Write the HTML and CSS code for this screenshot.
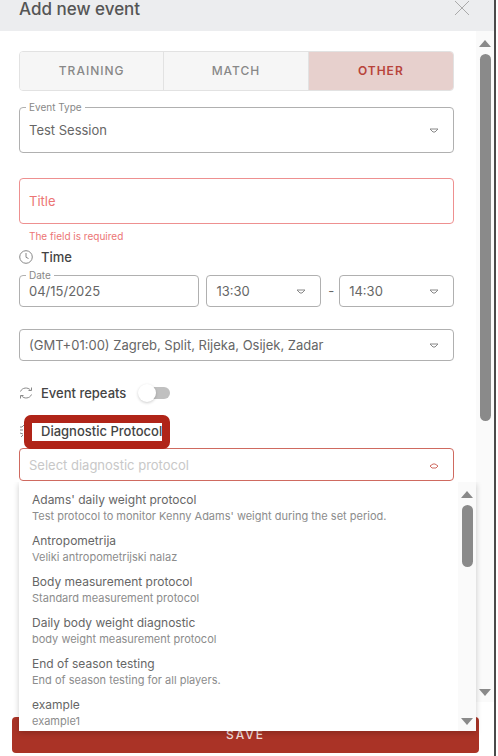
FILE: index.html
```html
<!DOCTYPE html>
<html lang="en">

<head>
<meta charset="utf-8">
<meta name="viewport" content="width=device-width, initial-scale=1">
<title>Add new event</title>
<link rel="stylesheet" href="styles.css">
</head>

<body>
    <div class="panel">
        <header class="panelHeader">
            <h1>Add new event</h1>
            <button type="button" class="closeButton" aria-label="Close">
                <svg width="16" height="16" viewBox="0 0 16 16"><path d="M1 1l14 14M15 1L1 15"/></svg>
            </button>
        </header>

        <div class="panelBody">
            <form class="eventForm" id="eventForm">
                <div class="tabs">
                    <button type="button">TRAINING</button>
                    <button type="button">MATCH</button>
                    <button type="button" class="active">OTHER</button>
                </div>

                <div class="field tall">
                    <label class="floating" for="eventType">Event Type</label>
                    <select id="eventType"><option>Test Session</option></select>
                    <svg class="arrow" width="10" height="6" viewBox="0 0 10 6"><path d="M1 1h8L6 4H4z"/></svg>
                </div>

                <div class="field tall error">
                    <input type="text" id="title" placeholder="Title" aria-label="Title" aria-describedby="titleError">
                </div>
                <p class="helper" id="titleError">The field is required</p>

                <div class="sectionRow timeRow">
                    <svg width="14" height="14" viewBox="0 0 14 14"><circle cx="7" cy="7" r="6.300"/><path d="M7 3v4.300l2.500 1.200"/></svg>
                    <span>Time</span>
                </div>

                <div class="dateRow">
                    <div class="field">
                        <label class="floating" for="date">Date</label>
                        <input type="text" id="date" value="04/15/2025">
                    </div>
                    <div class="field">
                        <select id="from" aria-label="Start time"><option>13:30</option></select>
                        <svg class="arrow" width="10" height="6" viewBox="0 0 10 6"><path d="M1 1h8L6 4H4z"/></svg>
                    </div>
                    <span class="dash">-</span>
                    <div class="field">
                        <select id="to" aria-label="End time"><option>14:30</option></select>
                        <svg class="arrow" width="10" height="6" viewBox="0 0 10 6"><path d="M1 1h8L6 4H4z"/></svg>
                    </div>
                </div>

                <div class="field zone">
                    <select id="zone" aria-label="Time zone"><option>(GMT+01:00) Zagreb, Split, Rijeka, Osijek, Zadar</option></select>
                    <svg class="arrow" width="10" height="6" viewBox="0 0 10 6"><path d="M1 1h8L6 4H4z"/></svg>
                </div>

                <div class="sectionRow repeatRow">
                    <svg width="14" height="14" viewBox="0 0 14 14"><path d="M1.500 5.500C3 1.500 9 .8 11.500 4.200M12.500 1.500v3h-3M12.500 8.500C11 12.500 5 13.200 2.500 9.800M1.500 12.500v-3h3"/></svg>
                    <label for="repeats">Event repeats</label>
                    <input type="checkbox" class="toggle" id="repeats">
                </div>

                <div class="sectionRow protocolRow">
                    <svg width="14" height="14" viewBox="0 0 14 14"><path d="M1 3h2l2-2M1 6h3M1 9l3 1M2 13l2-2M7 4v6"/></svg>
                    <label for="protocol">Diagnostic Protocol</label>
                    <div class="highlight"></div>
                </div>

                <div class="field open">
                    <input type="text" id="protocol" placeholder="Select diagnostic protocol" role="combobox" aria-expanded="true" aria-controls="protocolList">
                    <svg class="arrow" width="10" height="6" viewBox="0 0 10 6"><path d="M1 3l3-2h2l3 2-2 2H3z"/></svg>

                    <div class="menu">
                        <ul id="protocolList" role="listbox">
                            <li role="option"><b>Adams' daily weight protocol</b><small>Test protocol to monitor Kenny Adams' weight during the set period.</small></li>
                            <li role="option"><b>Antropometrija</b><small>Veliki antropometrijski nalaz</small></li>
                            <li role="option"><b>Body measurement protocol</b><small>Standard measurement protocol</small></li>
                            <li role="option"><b>Daily body weight diagnostic</b><small>body weight measurement protocol</small></li>
                            <li role="option"><b>End of season testing</b><small>End of season testing for all players.</small></li>
                            <li role="option"><b>example</b><small>example1</small></li>
                        </ul>
                        <div class="scrollbar">
                            <svg width="12" height="7" viewBox="0 0 12 7"><path d="M0 7l6-7 6 7z"/></svg>
                            <div class="thumb short"></div>
                            <svg width="12" height="7" viewBox="0 0 12 7"><path d="M0 0l6 7 6-7z"/></svg>
                        </div>
                    </div>
                </div>
            </form>

            <div class="scrollbar">
                <svg width="12" height="7" viewBox="0 0 12 7"><path d="M0 7l6-7 6 7z"/></svg>
                <div class="thumb"></div>
                <svg width="12" height="7" viewBox="0 0 12 7"><path d="M0 0l6 7 6-7z"/></svg>
            </div>
        </div>

        <footer class="panelFooter">
            <button type="submit" form="eventForm" class="saveButton">SAVE</button>
        </footer>
    </div>
</body>
</html>
```

FILE: styles.css
```css
* {
    box-sizing: border-box;
}
body {
    margin: 0;
    background-color: #fff;
    color: #666;
    font-family: Inter, "Liberation Sans", sans-serif;
    font-size: 13px;
    line-height: 16px;
}
button, input, select {
    font: inherit;
    color: inherit;
}
svg {
    flex: none;
    fill: none;
    stroke: #888;
}

.panel {
    display: flex;
    flex-direction: column;
    min-height: 100vh;
    margin-right: 2px;
    border-right: 2px solid #4a4a4a;
}
.panelHeader {
    display: flex;
    justify-content: space-between;
    align-items: flex-start;
    height: 31px;
    padding: 0 24px 0 19px;
    background-color: #ecedef;
}
.panelHeader h1 {
    margin: 0;
    font-size: 17px;
    font-weight: 500;
    line-height: 18px;
    color: #555;
}
.closeButton {
    display: flex;
    padding: 0;
    border: 0;
    background: none;
}
.closeButton svg {
    stroke: #aaa;
}
.panelBody {
    display: flex;
    flex: 1;
}
.eventForm {
    flex: 1;
    padding: 20px 22px 0 19px;
}

/* tabs */
.tabs {
    display: grid;
    grid-template-columns: repeat(3, 1fr);
    height: 40px;
    margin-bottom: 16px;
    border: 1px solid #e2e2e2;
    border-radius: 4px;
    overflow: hidden;
}
.tabs button {
    border: 0;
    border-right: 1px solid #e2e2e2;
    background-color: #f6f6f6;
    color: #888;
    font-size: 12px;
    font-weight: 500;
    letter-spacing: 1px;
}
.tabs .active {
    border-right: 0;
    background-color: #e7d0cd;
    color: #b8433a;
    font-weight: 600;
}

/* fields */
.field {
    position: relative;
    display: flex;
    min-width: 0;
    height: 32px;
    border: 1px solid #b0b0b0;
    border-radius: 4px;
}
.field.tall {
    height: 46px;
}
.field input,
.field select {
    flex: 1;
    min-width: 0;
    padding: 0 9px;
    border: 0;
    outline: 0;
    background: none;
    appearance: none;
}
.field.error {
    margin-top: 25px;
    border-color: #ee9090;
}
.field.error input::placeholder {
    color: #ec7575;
    opacity: 1;
}
.floating {
    position: absolute;
    top: -7px;
    left: 6px;
    padding: 0 3px;
    background-color: #fff;
    color: #888;
    font-size: 10px;
    line-height: 12px;
}
.arrow {
    position: absolute;
    right: 14px;
    top: calc(50% - 2px);
    pointer-events: none;
}
.helper {
    margin: 5px 0 6px 10px;
    color: #ec7575;
    font-size: 10px;
    line-height: 14px;
}
.dateRow {
    display: grid;
    grid-template-columns: 11fr 7fr 4px 7fr;
    gap: 7px;
    align-items: center;
}
.zone {
    margin-top: 22px;
}

.sectionRow {
    position: relative;
    display: flex;
    align-items: center;
    gap: 8px;
    height: 16px;
    color: #444;
    font-weight: 500;
}
.timeRow {
    margin-bottom: 10px;
}
.repeatRow {
    margin-top: 24px;
}
.protocolRow {
    margin: 22px 0 9px;
}
.toggle {
    position: relative;
    width: 28px;
    height: 12px;
    margin: 0 0 0 8px;
    border-radius: 6px;
    background-color: #c0c0c0;
    appearance: none;
}
.toggle::before {
    content: "";
    position: absolute;
    top: -3px;
    left: -4px;
    width: 18px;
    height: 18px;
    border-radius: 50%;
    background-color: #fff;
    box-shadow: 0 1px 3px rgba(0, 0, 0, .2);
}
.highlight {
    position: absolute;
    top: -8px;
    left: 5px;
    width: 146px;
    height: 34px;
    border: 8px solid #b02418;
    border-radius: 7px;
    z-index: 1;
}

/* protocol list */
.field.open {
    height: 33px;
    border-color: #cf6a60;
}
.open input::placeholder {
    color: #c8c8c8;
    opacity: 1;
}
.open .arrow {
    stroke: #cf6a60;
}
.menu {
    position: absolute;
    top: 33px;
    left: -1px;
    right: -23px;
    display: flex;
    background-color: #fff;
    box-shadow: 0 2px 6px rgba(0, 0, 0, .2);
    clip-path: inset(0 -10px -10px -10px);
    z-index: 2;
}
.menu ul {
    flex: 1;
    margin: 0;
    padding: 10px 0 2px 13px;
    list-style: none;
}
.menu li + li {
    margin-top: 9px;
}
.menu b,
.menu small {
    display: block;
    font-size: 12px;
    font-weight: 400;
}
.menu small {
    color: #8c8c8c;
    font-size: 11px;
}

.scrollbar {
    display: flex;
    flex-direction: column;
    align-items: center;
    width: 18px;
    padding: 9px 0 6px;
    background-color: #fafafa;
}
.scrollbar svg {
    fill: #8a8a8a;
    stroke: none;
}
.thumb {
    width: 11px;
    height: 367px;
    margin: 7px 0 auto;
    border-radius: 6px;
    background-color: #8a8a8a;
}
.thumb.short {
    height: 62px;
}

.panelFooter {
    padding: 15px 15px 3px 12px;
}
.saveButton {
    width: 100%;
    height: 36px;
    border: 0;
    border-radius: 4px;
    background-color: #aa3326;
    color: #f0dcd9;
    font-size: 12px;
    font-weight: 500;
    letter-spacing: 2px;
}
```
